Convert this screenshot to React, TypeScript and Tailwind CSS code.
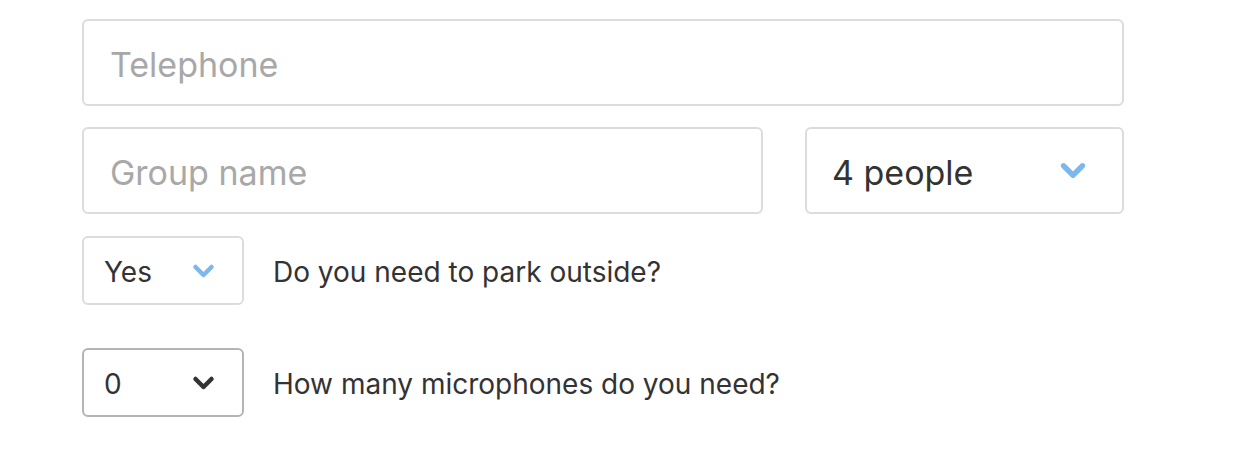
const Chevron = ({ className }: { className: string }) => (
  <svg viewBox="0 0 24 16" className={className} fill="none">
    <path
      d="M4 4l8 8 8-8"
      stroke="currentColor"
      strokeWidth="4.5"
      strokeLinecap="round"
      strokeLinejoin="round"
    />
  </svg>
);

export default function App() {
  return (
    <div className="min-h-screen bg-white font-['Inter',sans-serif] text-[#333]">
      <div className="ml-[82px] flex w-[1042px] flex-col pt-[19px]">
        {/* Telephone */}
        <div className="flex h-[87px] items-center rounded-[6px] border-2 border-[#dcdcdc] px-[26px] pt-[3px]">
          <span className="text-[34px] text-[#a8a8a8]">Telephone</span>
        </div>

        {/* Group name + people */}
        <div className="mt-[21px] flex gap-[42px]">
          <div className="flex h-[87px] w-[681px] items-center rounded-[6px] border-2 border-[#dcdcdc] px-[26px] pt-[3px]">
            <span className="text-[34px] text-[#a8a8a8]">Group name</span>
          </div>
          <div className="flex h-[87px] flex-1 items-center justify-between rounded-[6px] border-2 border-[#dcdcdc] pl-[25px] pr-[34px]">
            <span className="pt-[3px] text-[34px] text-[#333]">4 people</span>
            <Chevron className="h-[19px] w-[30px] text-[#7db8ec]" />
          </div>
        </div>

        {/* Parking */}
        <div className="mt-[22px] flex items-center gap-[29px]">
          <div className="flex h-[69px] w-[162px] items-center justify-between rounded-[6px] border-2 border-[#dcdcdc] pl-[20px] pr-[26px]">
            <span className="pt-[2px] text-[28px] text-[#333]">Yes</span>
            <Chevron className="h-[16px] w-[25px] text-[#7db8ec]" />
          </div>
          <span className="pt-[2px] text-[28px] text-[#333]">Do you need to park outside?</span>
        </div>

        {/* Microphones */}
        <div className="mt-[43px] flex items-center gap-[29px]">
          <div className="flex h-[69px] w-[162px] items-center justify-between rounded-[6px] border-2 border-[#b4b4b4] pl-[20px] pr-[26px]">
            <span className="pt-[2px] text-[28px] text-[#333]">0</span>
            <Chevron className="h-[16px] w-[25px] text-[#333]" />
          </div>
          <span className="pt-[2px] text-[28px] text-[#333]">How many microphones do you need?</span>
        </div>
      </div>
    </div>
  );
}
